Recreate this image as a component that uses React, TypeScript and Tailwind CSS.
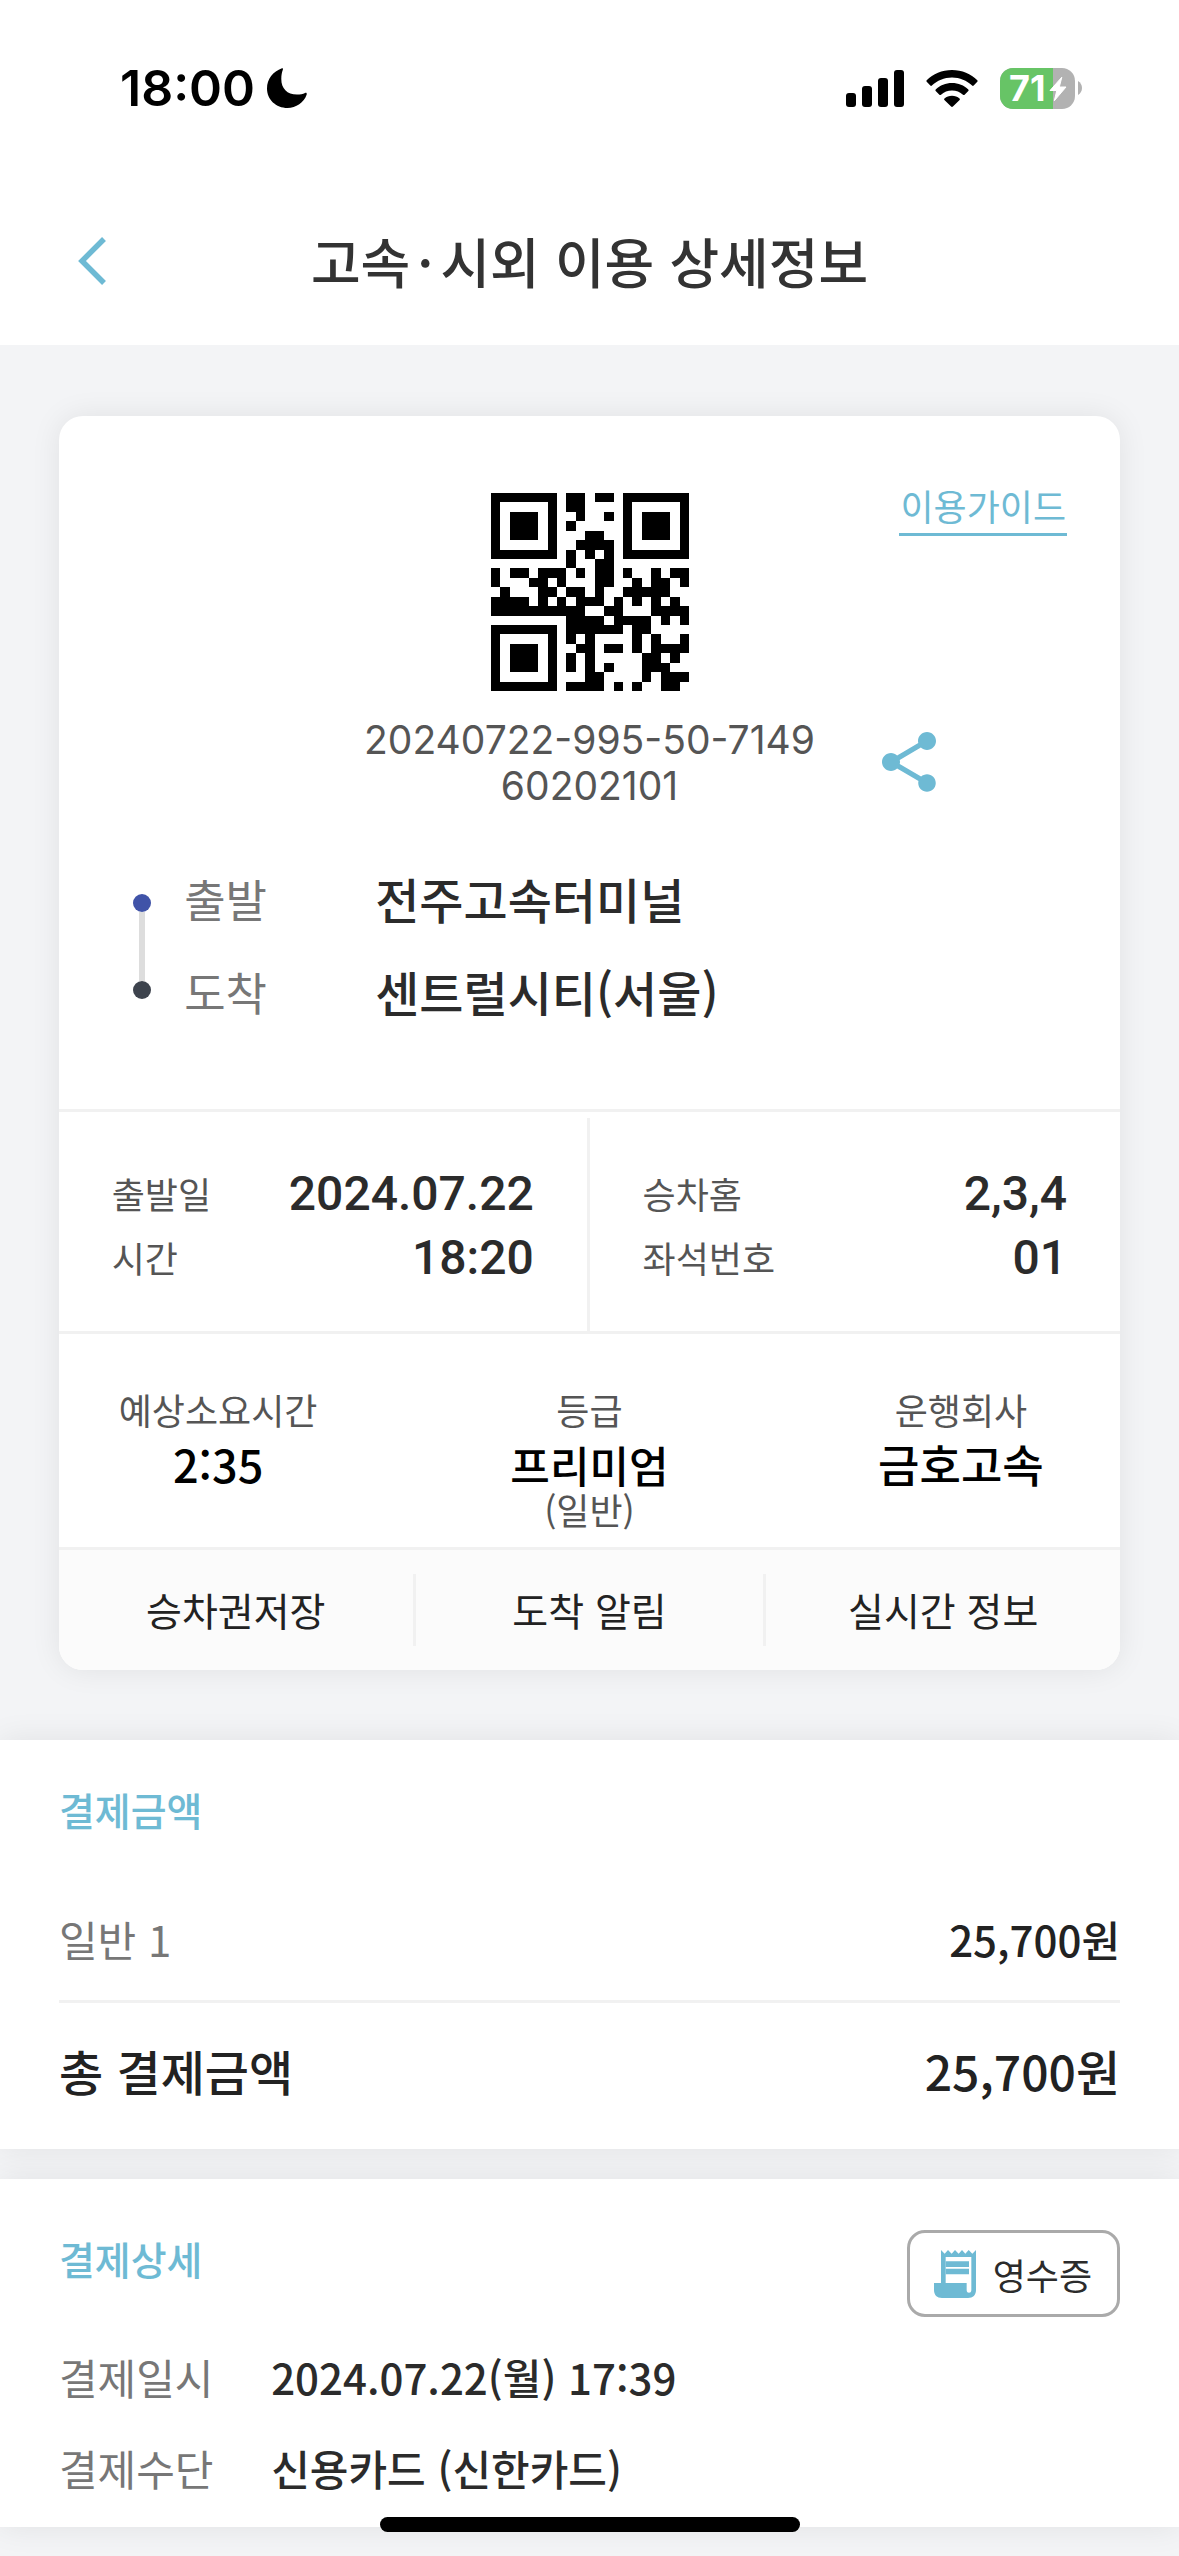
import React from "react";
import { MdShare } from "react-icons/md";

const QR_ROWS = [
  "111111101101101111111",
  "100000101100001000001",
  "101110100100101011101",
  "101110101000001011101",
  "101110100011001011101",
  "100000100111101000001",
  "111111101010101111111",
  "000000001001100000000",
  "101101110101101001011",
  "100011010001100101101",
  "010001101101001111100",
  "111101010111010101010",
  "111111111100110001111",
  "000000001111011110101",
  "111111101111110110000",
  "100000101010000101001",
  "101110100110110101111",
  "101110101010000011010",
  "101110101010100011100",
  "100000100011000010111",
  "111111101111010100110",
];

function QrCode() {
  const d = QR_ROWS.map((row, y) =>
    Array.from(row.matchAll(/1+/g))
      .map((m) => `M${m.index} ${y}h${m[0].length}v1h-${m[0].length}z`)
      .join(""),
  ).join("");
  return (
    <svg viewBox="0 0 21 21" className="size-[198px]" role="img" aria-label="승차권 QR 코드">
      <path d={d} fill="#000" shapeRendering="crispEdges" />
    </svg>
  );
}

function StatusBar() {
  return (
    <div className="flex h-[177px] items-start justify-between pt-[60px] pr-[97px] pl-[120px]">
      <div className="flex h-14 items-center gap-3 font-['Inter',sans-serif] text-[50px] leading-none font-semibold text-black">
        18:00
        <svg viewBox="0 0 40 40" className="size-10" aria-hidden="true">
          <path
            d="M15 .2C6 3.500 0 11 0 20.500 0 31.500 9 40 20.500 40c8.500 0 16.500-5.500 19.200-13.500.3-1.300-.4-2-1.700-1.500-2 1-5 1.600-8 1.600-10 0-15.700-6.100-15.700-15.600 0-3.500.5-6.500 1.600-9.400C16.200.6 15.800 0 15 .2z"
            fill="currentColor"
          />
        </svg>
      </div>
      <div className="flex h-14 items-center gap-[22px]">
        <svg viewBox="0 0 58 37" className="h-[37px] w-[58px]" aria-hidden="true">
          <rect x="0" y="23" width="10" height="14" rx="3" />
          <rect x="16" y="16" width="10" height="21" rx="3" />
          <rect x="32" y="8" width="10" height="29" rx="3" />
          <rect x="48" y="0" width="10" height="37" rx="3" />
        </svg>
        <svg viewBox="0 0 52 37" className="h-[37px] w-[52px]" aria-hidden="true">
          <path d="M26 0C16 0 7 4 .7 10.200c-.5.5-.5 1.100 0 1.600l3.600 3.700c.5.5 1.100.5 1.600 0C11.200 10.500 18.200 7.500 26 7.500s14.800 3 20.100 8c.5.5 1.100.5 1.600 0l3.600-3.700c.5-.5.5-1.100 0-1.600C45 4 36 0 26 0z" />
          <path d="M26 13c-6.300 0-12 2.400-16.300 6.400-.5.500-.5 1.100 0 1.600l3.700 3.700c.5.5 1.100.5 1.600 0 2.900-2.600 6.800-4.200 11-4.200s8.100 1.600 11 4.200c.5.5 1.100.5 1.600 0l3.700-3.700c.5-.5.5-1.100 0-1.600C38 15.400 32.300 13 26 13z" />
          <path d="M26 25.800c-2.900 0-5.500 1-7.500 2.700-.5.400-.5 1.100-.1 1.500l6.700 6.600c.5.500 1.300.5 1.800 0l6.700-6.600c.4-.4.4-1.100-.1-1.500-2-1.700-4.600-2.700-7.500-2.700z" />
        </svg>
        <div className="flex items-center gap-[3px]">
          <div className="relative flex h-[41px] w-[75px] items-center overflow-hidden rounded-[13px] bg-[#b2b2b2]">
            <div className="absolute inset-y-0 left-0 w-[53px] bg-[#67c466]" />
            <span className="relative pl-[9px] font-['Inter',sans-serif] text-[36px] leading-none font-bold text-white">
              71
            </span>
            <svg viewBox="0 0 18 26" className="absolute top-2 left-[49px] h-[26px] w-[18px]" aria-hidden="true">
              <path
                d="M12.800 1.200 1 14.500h6.800L5.300 24.800 17 11h-6.700z"
                fill="#fff"
                stroke="#fff"
                strokeWidth="1"
                strokeLinejoin="round"
              />
            </svg>
          </div>
          <svg viewBox="0 0 4 14" className="h-[14px] w-1" aria-hidden="true">
            <path d="M0 0c2.500 1.500 4 4 4 7s-1.500 5.500-4 7z" fill="#b2b2b2" />
          </svg>
        </div>
      </div>
    </div>
  );
}

function Header() {
  return (
    <header className="bg-white">
      <StatusBar />
      <div className="relative flex h-[168px] items-center justify-center">
        <button type="button" aria-label="뒤로" className="absolute inset-y-0 left-0 flex w-40 items-center pl-[78px]">
          <svg viewBox="0 0 29 48" className="h-12 w-[29px]" fill="none" aria-hidden="true">
            <path d="M26 2 4 24l22 22" stroke="#6ebad4" strokeWidth="5.500" />
          </svg>
        </button>
        <h1 className="text-[54px] leading-[80px] font-medium text-[#333]">
          고속<span className="mx-[7px]">·</span>시외 이용 상세정보
        </h1>
      </div>
    </header>
  );
}

function Route() {
  return (
    <div className="mt-[43px] flex items-center px-[7%] pb-[71px]">
      <div className="flex flex-col items-center pt-[3px]" aria-hidden="true">
        <span className="size-[18px] rounded-full bg-[#4053a8]" />
        <span className="h-[69px] w-1.5 bg-[#ddd]" />
        <span className="size-[18px] rounded-full bg-[#3d434d]" />
      </div>
      <dl className="ml-[33px] flex-1 text-[48px] leading-[93px]">
        {[
          ["출발", "전주고속터미널"],
          ["도착", "센트럴시티(서울)"],
        ].map(([label, value]) => (
          <div key={label} className="flex">
            <dt className="w-[191px] text-[45px] text-[#777]">{label}</dt>
            <dd className="font-medium text-[#2b2b2b]">{value}</dd>
          </div>
        ))}
      </dl>
    </div>
  );
}

function BoardingColumn({ rows }: { rows: string[][] }) {
  return (
    <dl className="px-[10%] pt-[43px] pb-[42px]">
      {rows.map(([label, value]) => (
        <div key={label} className="flex h-16 items-center justify-between">
          <dt className="text-[36px] text-[#555]">{label}</dt>
          <dd className="pt-0.5 font-['Roboto',sans-serif] text-[48px] leading-[64px] font-medium text-[#2b2b2b]">
            {value}
          </dd>
        </div>
      ))}
    </dl>
  );
}

function TripFact({ label, children }: { label: string; children: React.ReactNode }) {
  return (
    <div className="flex flex-col items-center">
      <dt className="text-[36px] leading-[55px] text-[#555]">{label}</dt>
      {children}
    </div>
  );
}

function Ticket() {
  const actions = ["승차권저장", "도착 알림", "실시간 정보"];
  return (
    <section className="overflow-hidden rounded-[24px] bg-white shadow-[0_0_30px_rgba(0,0,0,0.08)]">
      <div className="grid grid-cols-[1fr_auto_1fr] px-[5%] pt-[77px]">
        <div className="col-start-2 flex justify-center">
          <QrCode />
        </div>
        <a
          href="#guide"
          className="-mt-[11px] self-start justify-self-end border-b-[3px] border-[#6ebad4] px-px pb-[5px] text-[36px] leading-[46px] text-[#6ebad4]"
        >
          이용가이드
        </a>
        <p className="col-start-2 mt-[26px] w-[464px] text-center font-['Inter',sans-serif] text-[39px] leading-[46px] break-all text-[#555]">
          20240722-995-50-714960202101
        </p>
        <button type="button" aria-label="공유" className="mt-6 ml-[51px] self-center justify-self-start">
          <MdShare className="size-[72px] text-[#6ebad4]" />
        </button>
      </div>

      <Route />

      <div className="grid grid-cols-2 border-y-[3px] border-[#f1f1f1] pt-1.5">
        <div className="border-r-[3px] border-[#f1f1f1]">
          <BoardingColumn
            rows={[
              ["출발일", "2024.07.22"],
              ["시간", "18:20"],
            ]}
          />
        </div>
        <BoardingColumn
          rows={[
            ["승차홈", "2,3,4"],
            ["좌석번호", "01"],
          ]}
        />
      </div>

      <dl className="grid grid-cols-[3fr_4fr_3fr] pt-12 pb-[18px]">
        <TripFact label="예상소요시간">
          <dd className="text-[45px] leading-[54px] font-medium text-black">2:35</dd>
        </TripFact>
        <TripFact label="등급">
          <dd className="text-[43px] leading-[54px] font-medium text-black">프리미엄</dd>
          <dd className="text-[36px] leading-[36px] text-[#555]">(일반)</dd>
        </TripFact>
        <TripFact label="운행회사">
          <dd className="text-[45px] leading-[54px] font-medium text-black">금호고속</dd>
        </TripFact>
      </dl>

      <div className="mt-0.5 grid h-[123px] grid-cols-3 items-center border-t-[3px] border-[#f1f1f1] bg-[#fbfbfb]">
        {actions.map((action) => (
          <button
            key={action}
            type="button"
            className="h-[72px] border-[#f1f1f1] pb-0.5 text-[39px] text-[#222] even:border-x-[3px]"
          >
            {action}
          </button>
        ))}
      </div>
    </section>
  );
}

function ReceiptIcon() {
  return (
    <svg viewBox="0 0 126 144" className="h-12 w-[42px]" aria-hidden="true">
      <path
        d="M21 0l11 11 10-11 11 11 10-11 11 11 10-11 10 11 10-11 11 11 11-11v120c0 15-9 24-24 24H24C9 144 0 135 0 120V99h21z"
        fill="#6ebad4"
      />
      <path d="M35 21h77v100c0 10-14 10-14 0V99H35z" fill="#fff" />
      <path d="M35 34h70v17H35zM35 56h70v17H35z" fill="#6ebad4" />
    </svg>
  );
}

function PaymentAmount() {
  return (
    <section className="bg-white px-[5%] pt-9 pb-3 shadow-[0_0_30px_rgba(0,0,0,0.08)]">
      <h2 className="text-[39px] leading-[66px] font-medium text-[#6ebad4]">결제금액</h2>
      <dl className="mt-[34px] text-[#222]">
        <div className="flex h-[127px] items-center justify-between border-b-[3px] border-[#f1f1f1] text-[42px]">
          <dt className="text-[#777]">일반 1</dt>
          <dd className="font-medium">25,700원</dd>
        </div>
        <div className="flex h-[134px] items-center justify-between text-[48px] font-medium">
          <dt>총 결제금액</dt>
          <dd>25,700원</dd>
        </div>
      </dl>
    </section>
  );
}

function PaymentDetail() {
  return (
    <section className="mt-[30px] bg-white px-[5%] pt-[51px] pb-[14px] shadow-[0_0_30px_rgba(0,0,0,0.08)]">
      <div className="flex items-start justify-between">
        <h2 className="text-[39px] leading-[56px] font-medium text-[#6ebad4]">결제상세</h2>
        <button
          type="button"
          className="flex h-[87px] items-center gap-[17px] rounded-[18px] border-[3px] border-[#aaa] pr-[25px] pl-6 text-[36px] text-[#2b2b2b]"
        >
          <ReceiptIcon />
          영수증
        </button>
      </div>
      <dl className="mt-[14px] text-[42px] leading-[91px]">
        {[
          ["결제일시", "2024.07.22(월) 17:39"],
          ["결제수단", "신용카드 (신한카드)"],
        ].map(([label, value]) => (
          <div key={label} className="flex">
            <dt className="w-1/5 text-[#777]">{label}</dt>
            <dd className="font-medium text-[#2b2b2b]">{value}</dd>
          </div>
        ))}
      </dl>
    </section>
  );
}

export default function App() {
  return (
    <div lang="ko" className="min-h-screen overflow-x-hidden bg-gray-100 pb-[29px] font-['Noto_Sans_CJK_KR',sans-serif]">
      <Header />
      <main>
        <div className="px-[5%] pt-[71px] pb-[70px]">
          <Ticket />
        </div>
        <PaymentAmount />
        <PaymentDetail />
      </main>
      <div className="fixed bottom-6 left-1/2 h-[15px] w-[420px] -translate-x-1/2 rounded-full bg-black" />
    </div>
  );
}
